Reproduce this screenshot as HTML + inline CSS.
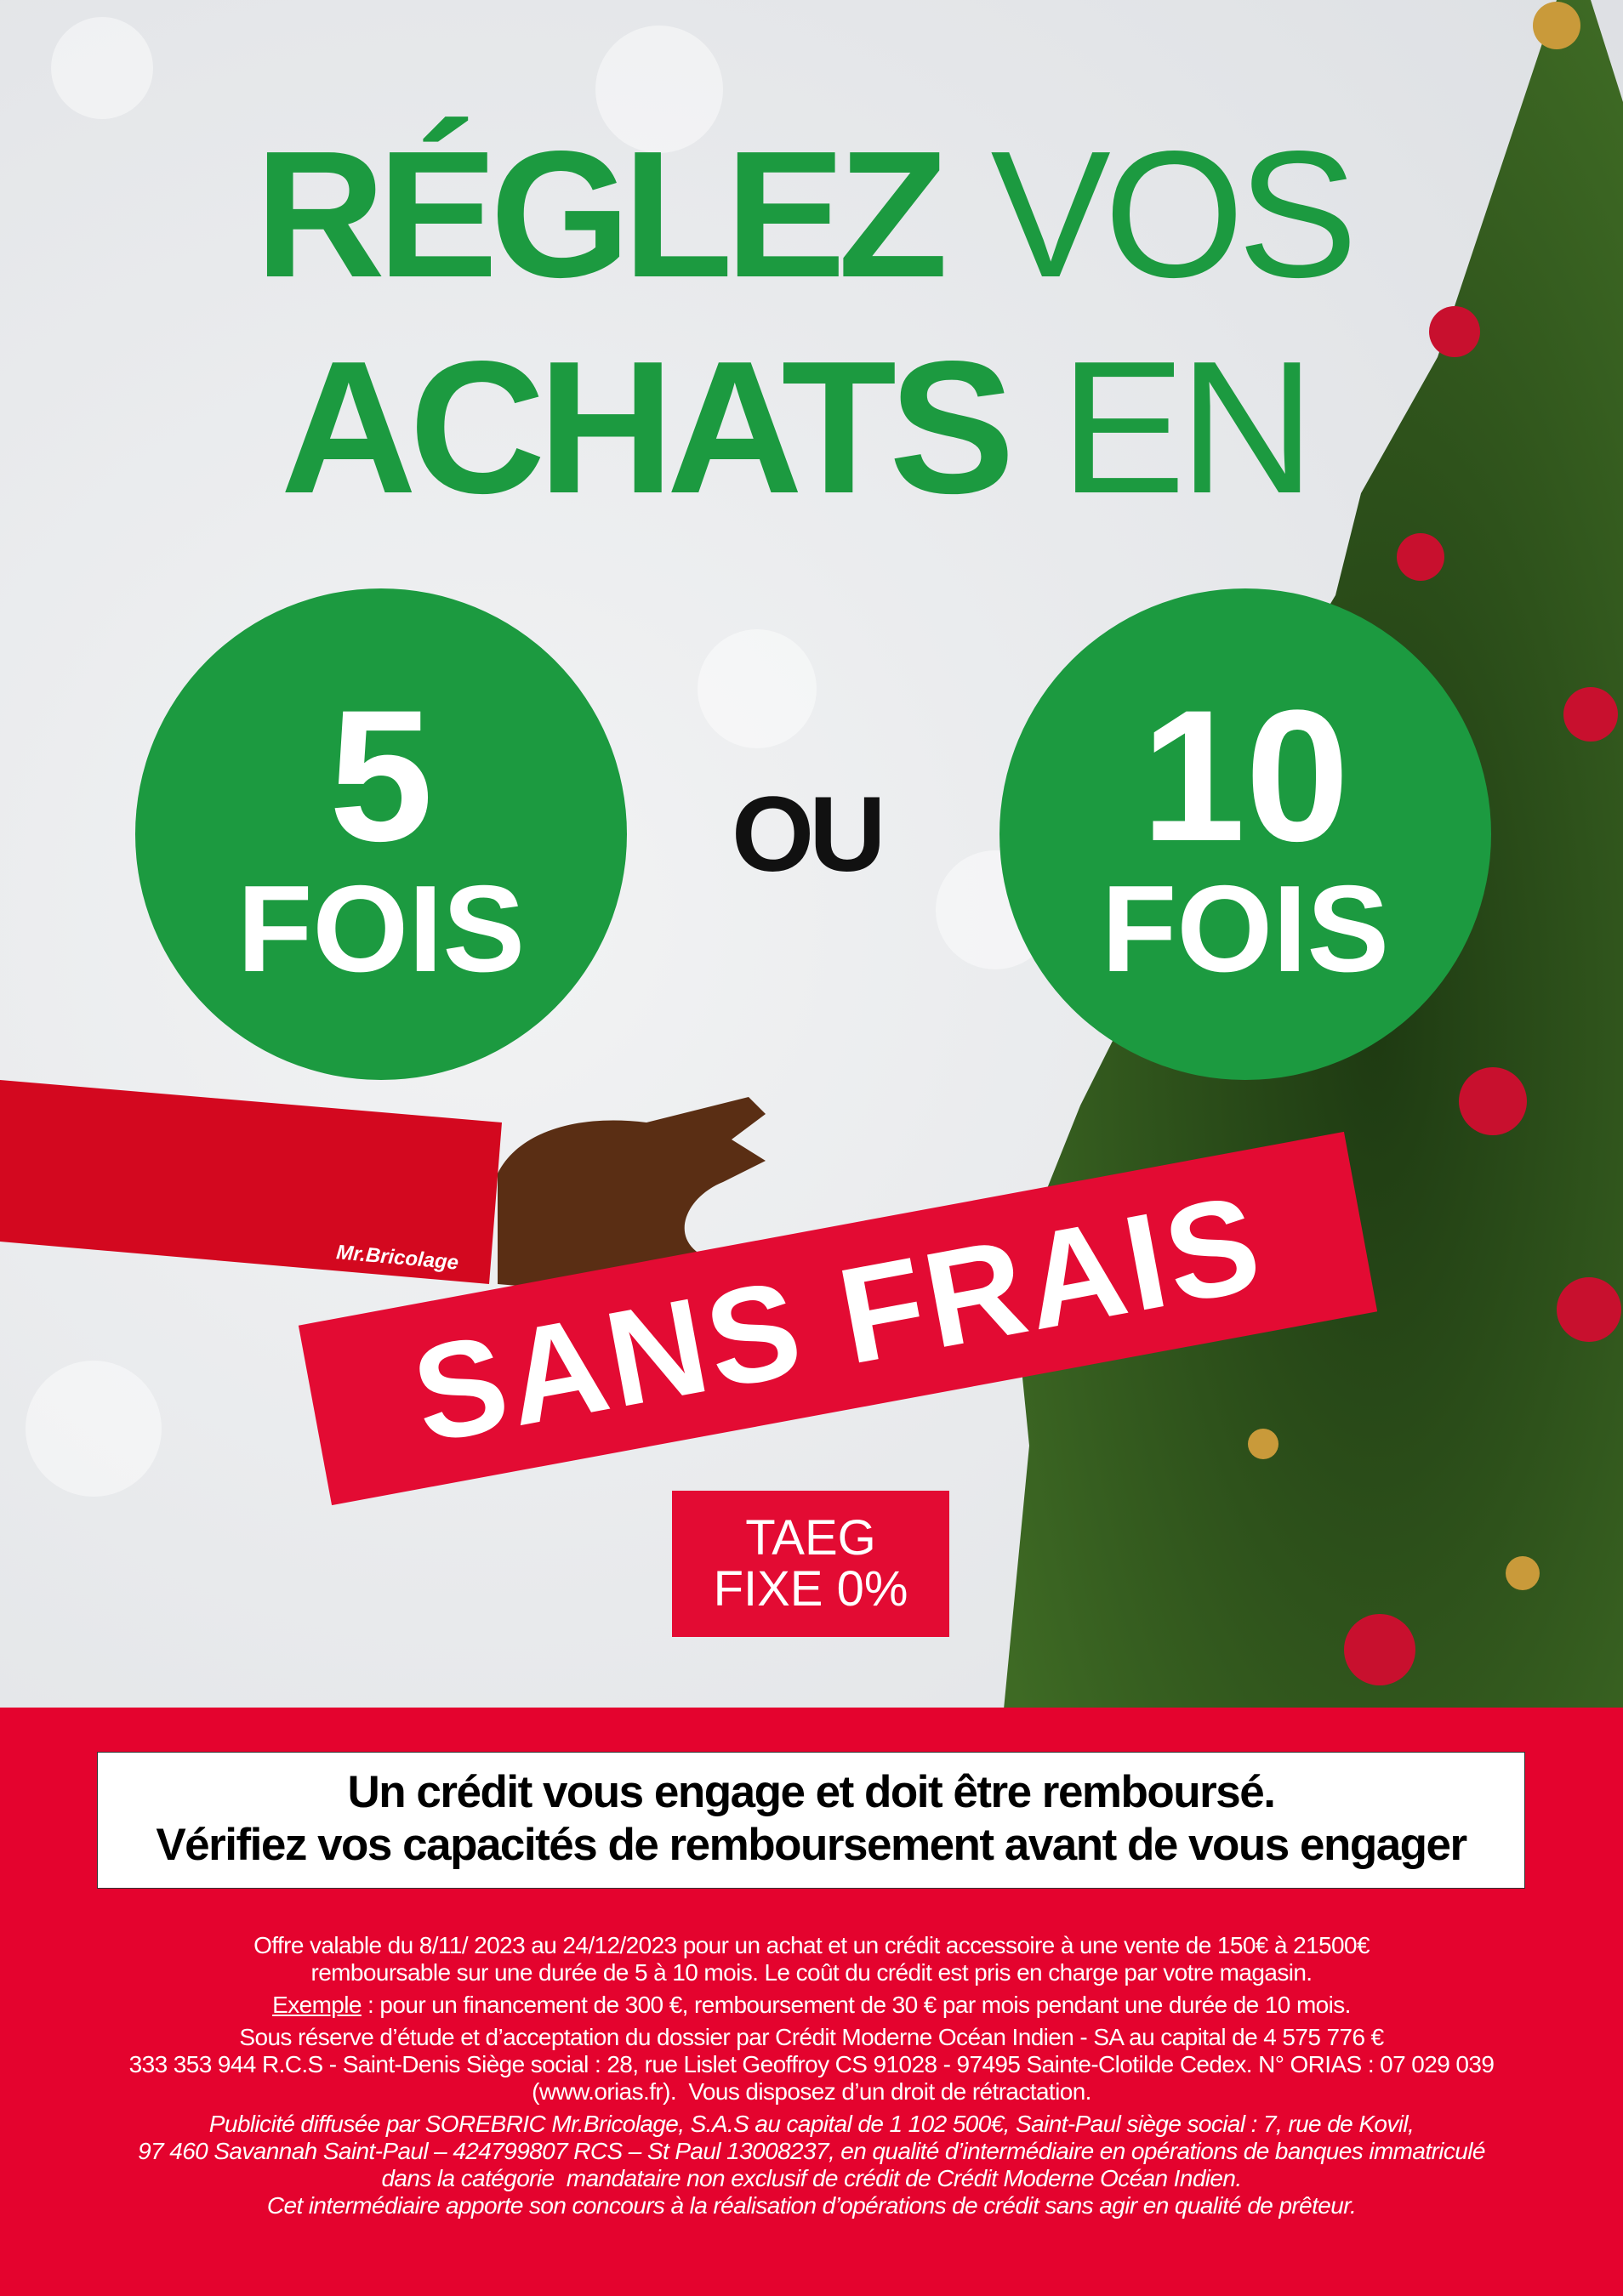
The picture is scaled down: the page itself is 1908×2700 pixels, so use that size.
<!DOCTYPE html>
<html><head><meta charset="utf-8"><style>
html,body{margin:0;padding:0}
body{width:1908px;height:2700px;position:relative;overflow:hidden;font-family:"Liberation Sans",sans-serif;
background:radial-gradient(circle at 30% 40%,#f2f3f4 0,#e3e5e8 60%,#d9dce0 100%);}
.abs{position:absolute}
.h{left:0;width:1908px;text-align:center;color:#1c9a40;line-height:1;white-space:nowrap}
.h b{font-weight:700;letter-spacing:-9px}.h span{font-weight:400;letter-spacing:-8px}
.circ{width:578px;height:578px;border-radius:50%;background:#1c9a40;color:#fff;text-align:center;font-weight:700}
.circ .n{font-size:220px;line-height:1;margin-top:110px}
.circ .f{font-size:145px;line-height:1;margin-top:-2px}
.bok{position:absolute;border-radius:50%;background:rgba(255,255,255,.45)}
.foot p{margin:0}
</style></head><body>
<div class="bok" style="left:60px;top:20px;width:120px;height:120px"></div>
<div class="bok" style="left:700px;top:30px;width:150px;height:150px"></div>
<div class="bok" style="left:820px;top:740px;width:140px;height:140px"></div>
<div class="bok" style="left:1100px;top:1000px;width:140px;height:140px"></div>
<div class="bok" style="left:30px;top:1600px;width:160px;height:160px"></div>
<svg class="abs" style="left:1150px;top:0" width="758" height="2010">
<defs><radialGradient id="t" cx="60%" cy="60%" r="70%"><stop offset="0" stop-color="#1e3a12"/><stop offset="1" stop-color="#3e6a24"/></radialGradient></defs>
<polygon points="680,0 720,0 758,120 758,2010 30,2010 60,1700 40,1500 120,1300 170,1200 220,1100 300,950 330,850 420,700 450,580 540,420 580,300 620,180" fill="url(#t)"/>
<circle cx="680" cy="30" r="28" fill="#c99a3a"/>
<circle cx="560" cy="390" r="30" fill="#c8102e"/><circle cx="520" cy="655" r="28" fill="#c8102e"/>
<circle cx="720" cy="840" r="32" fill="#c8102e"/><circle cx="605" cy="1295" r="40" fill="#c8102e"/>
<circle cx="718" cy="1540" r="38" fill="#c8102e"/><circle cx="472" cy="1940" r="42" fill="#c8102e"/>
<circle cx="640" cy="1850" r="20" fill="#c99a3a"/><circle cx="335" cy="1698" r="18" fill="#c99a3a"/>
</svg>
<div class="abs h" style="top:146px;left:-10px;font-size:212px"><b>RÉGLEZ</b> <span>VOS</span></div>
<div class="abs h" style="top:392px;left:-20px;font-size:222px"><b>ACHATS</b> <span>EN</span></div>
<div class="abs circ" style="left:159px;top:692px"><div class="n">5</div><div class="f">FOIS</div></div>
<div class="abs circ" style="left:1175px;top:692px"><div class="n">10</div><div class="f">FOIS</div></div>
<div class="abs" style="left:860px;top:910px;font-size:125px;font-weight:700;color:#111;letter-spacing:-6px">OU</div>
<svg class="abs" style="left:0;top:1270px" width="600" height="250">
<polygon points="0,0 590,50 575,240 0,190" fill="#d3081f"/>
<text x="395" y="215" fill="#fff" font-size="24" font-style="italic" font-weight="700" font-family="Liberation Sans" transform="rotate(5 450 210)">Mr.Bricolage</text>
</svg>
<svg class="abs" style="left:580px;top:1270px" width="320" height="260">
<path d="M5,110 C30,60 100,40 180,50 L300,20 L320,40 L280,70 L320,95 L270,120 C220,140 200,200 270,215 L260,240 L120,250 L5,240Z" fill="#5a2e14"/>
</svg>
<div class="abs" style="left:360px;top:1443px;width:1250px;height:215px;background:#e30b33;transform:rotate(-10.5deg);color:#fff;font-weight:700;font-size:160px;line-height:215px;text-align:center;letter-spacing:4px">SANS FRAIS</div>
<div class="abs" style="left:790px;top:1753px;width:326px;height:172px;background:#e30b33;color:#fff;text-align:center;font-size:58px;line-height:60px;padding-top:26px;box-sizing:border-box">TAEG<br>FIXE 0%</div>
<div class="abs" style="left:0;top:2008px;width:1908px;height:692px;background:#e4032e"></div>
<div class="abs" style="left:114px;top:2060px;width:1679px;height:161px;background:#fff;border:1px solid #333;box-sizing:border-box;text-align:center;font-weight:700;font-size:53px;line-height:62px;padding-top:16px;letter-spacing:-1.5px">Un crédit vous engage et doit être remboursé.<br>Vérifiez vos capacités de remboursement avant de vous engager</div>
<div class="abs foot" style="left:0;top:2272px;width:1908px;text-align:center;color:#fff;font-size:28px;line-height:32px;letter-spacing:-0.6px">
<p>Offre valable du 8/11/ 2023 au 24/12/2023 pour un achat et un crédit accessoire à une vente de 150€ à 21500€<br>remboursable sur une durée de 5 à 10 mois. Le coût du crédit est pris en charge par votre magasin.</p>
<p style="margin-top:6px"><u>Exemple</u> : pour un financement de 300 €, remboursement de 30 € par mois pendant une durée de 10 mois.</p>
<p style="margin-top:6px">Sous réserve d’étude et d’acceptation du dossier par Crédit Moderne Océan Indien - SA au capital de 4 575 776 €<br>333 353 944 R.C.S - Saint-Denis Siège social : 28, rue Lislet Geoffroy CS 91028 - 97495 Sainte-Clotilde Cedex. N° ORIAS : 07 029 039<br>(www.orias.fr).&nbsp; Vous disposez d’un droit de rétractation.</p>
<p style="margin-top:6px;font-style:italic">Publicité diffusée par SOREBRIC Mr.Bricolage, S.A.S au capital de 1 102 500€, Saint-Paul siège social : 7, rue de Kovil,<br>97 460 Savannah Saint-Paul – 424799807 RCS – St Paul 13008237, en qualité d’intermédiaire en opérations de banques immatriculé<br>dans la catégorie&nbsp; mandataire non exclusif de crédit de Crédit Moderne Océan Indien.<br>Cet intermédiaire apporte son concours à la réalisation d’opérations de crédit sans agir en qualité de prêteur.</p>
</div>
</body></html>
